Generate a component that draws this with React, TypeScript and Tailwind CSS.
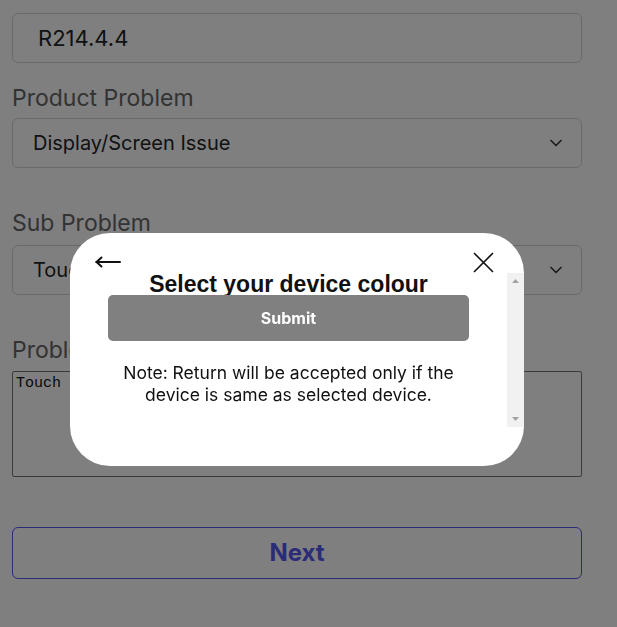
import { ChevronDown } from "lucide-react";

const fieldText = "text-[20px] text-[#212529]";

function Select({ value }: { value: string }) {
  return (
    <div className="flex h-[50px] w-[570px] items-center justify-between rounded-[6px] border border-[#ced4da] bg-white pl-[20px] pr-[15px]">
      <span className={fieldText}>{value}</span>
      <ChevronDown size={20} strokeWidth={2} className="text-[#343a40]" />
    </div>
  );
}

function Label({ children, className = "" }: { children: string; className?: string }) {
  return <div className={"text-[23px] leading-[28px] text-[#666] " + className}>{children}</div>;
}

function ColourModal() {
  return (
    <div className="fixed inset-0 bg-black/50 pl-[70px] pt-[233px]">
      <div className="flex h-[233px] w-[454px] flex-col rounded-[40px] bg-white">
        {/* header icons */}
        <div className="flex h-[40px] shrink-0 items-start justify-between pl-[25px] pr-[30px]">
          <svg width="26" height="14" viewBox="0 0 26 14" className="mt-[22px]" fill="none" stroke="#111" strokeWidth="2" strokeLinecap="round">
            <path d="M1.5 7H25" />
            <path d="M6.5 2.5L1.5 7L6.5 11.5" />
          </svg>
          <svg width="21" height="21" viewBox="0 0 21 21" className="mt-[19px]" fill="none" stroke="#111" strokeWidth="1.6">
            <path d="M1 1L20 20M20 1L1 20" />
          </svg>
        </div>

        {/* scroll body */}
        <div className="flex h-[154px] shrink-0">
          <div className="flex flex-1 flex-col items-center">
            <div className="h-[22px] overflow-hidden whitespace-nowrap text-center text-[23px] font-bold leading-[22px] text-[#111]" style={{ fontFamily: '"Liberation Sans", Arial, sans-serif' }}>
              Select your device colour
            </div>
            <button className="flex h-[46px] w-[361px] items-center justify-center rounded-[5px] bg-[#808080] text-[16px] font-bold text-white">
              Submit
            </button>
            <p className="mt-[21px] w-[370px] text-center text-[17.5px] leading-[22px] text-[#111]">
              Note: Return will be accepted only if the device is same as selected device.
            </p>
          </div>
          <div className="flex w-[17px] flex-col items-center justify-between bg-[#f1f1f1] py-[6px]">
            <svg width="7" height="4" viewBox="0 0 7 4"><path d="M3.5 0L7 4H0Z" fill="#a3a3a3" /></svg>
            <svg width="7" height="4" viewBox="0 0 7 4"><path d="M0 0H7L3.5 4Z" fill="#a3a3a3" /></svg>
          </div>
        </div>
      </div>
    </div>
  );
}

export default function App() {
  return (
    <div className="relative h-[627px] w-[617px] overflow-hidden bg-white pl-[12px] pt-[13px]" style={{ fontFamily: "Inter, 'Noto Sans', sans-serif" }}>
      <div className="flex h-[50px] w-[570px] items-center rounded-[6px] border border-[#ced4da] pl-[25px]">
        <span className="text-[22px] text-[#212529]">R214.4.4</span>
      </div>

      <Label className="mt-[21px] mb-[6px]">Product Problem</Label>
      <Select value="Display/Screen Issue" />

      <Label className="mt-[41px] mb-[8px]">Sub Problem</Label>
      <Select value="Touch Not Working" />

      <Label className="mt-[41px] mb-[7px]">Problem Description</Label>
      <textarea
        className="block h-[106px] w-[570px] resize-none rounded-[2px] border border-[#767676] p-[3px] text-[15px] leading-[18px] text-[#111]"
        style={{ fontFamily: '"Liberation Mono", monospace' }}
        defaultValue="Touch"
      />

      <button className="mt-[50px] flex h-[52px] w-[570px] items-center justify-center rounded-[6px] border border-[#5558f0] text-[24px] font-bold text-[#5558f0]">
        Next
      </button>

      <ColourModal />
    </div>
  );
}
